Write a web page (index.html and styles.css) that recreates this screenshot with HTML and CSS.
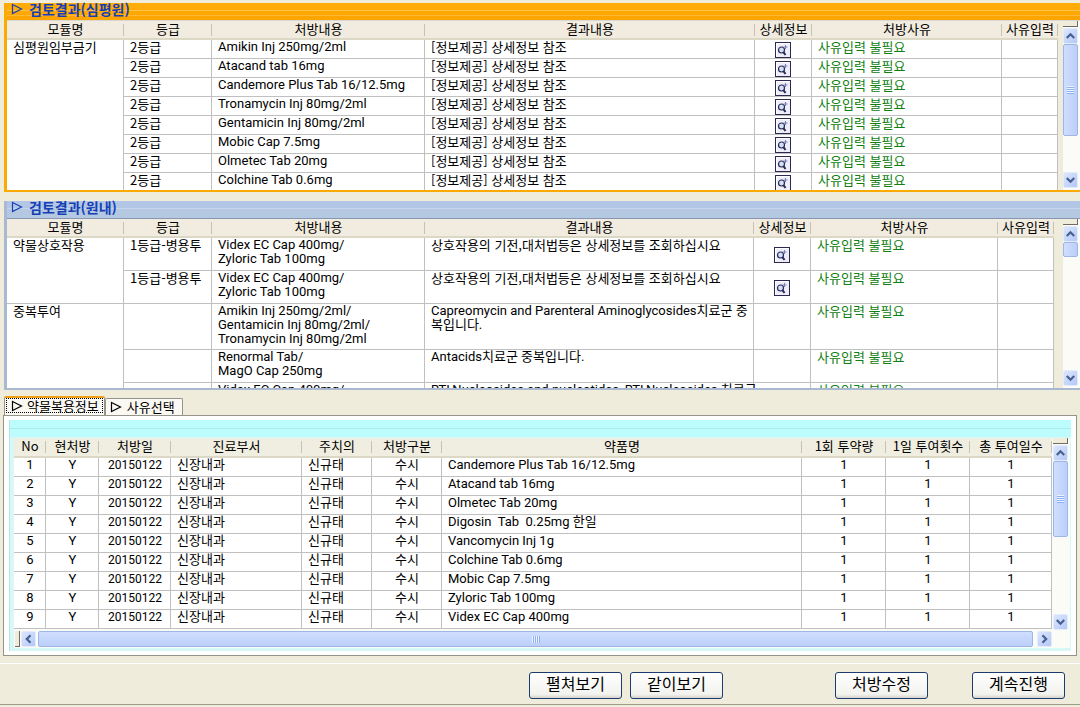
FILE: index.html
```html
<!DOCTYPE html>
<html lang="ko">
<head>
<meta charset="utf-8">
<title>처방 검토결과</title>
<link rel="stylesheet" href="styles.css">
</head>
<body>
<svg class="defs" aria-hidden="true">
  <symbol id="lens" viewBox="0 0 16 16">
    <rect x="0.5" y="0.5" width="15" height="15" fill="#eeeef8" stroke="#2c2850"/>
    <path d="M1.500 14.500V1.500H14.500" fill="none" stroke="#fff"/>
    <circle cx="6.500" cy="8" r="3" fill="#d4e0f4" stroke="#2a2a58" stroke-width="1.200"/>
    <path d="M8.500 10.200L10.500 13" stroke="#2a2a58" stroke-width="2"/>
    <path d="M10.500 3V7M8.500 5H12.500" stroke="#7a82b4"/>
  </symbol>
  <symbol id="play" viewBox="0 0 12 12"><path d="M1.500 1.500L10.500 6L1.500 10.500Z" fill="none" stroke="currentColor" stroke-width="1.200"/></symbol>
  <symbol id="up" viewBox="0 0 14 14"><path d="M3 9.200L7 5.200L11 9.200" fill="none" stroke="#46618f" stroke-width="2.400"/></symbol>
  <symbol id="down" viewBox="0 0 14 14"><path d="M3 4.800L7 8.800L11 4.800" fill="none" stroke="#46618f" stroke-width="2.400"/></symbol>
  <symbol id="left" viewBox="0 0 14 14"><path d="M9.200 3L5.200 7L9.200 11" fill="none" stroke="#46618f" stroke-width="2.400"/></symbol>
  <symbol id="right" viewBox="0 0 14 14"><path d="M4.800 3L8.800 7L4.800 11" fill="none" stroke="#46618f" stroke-width="2.400"/></symbol>
</svg>
<main class="app">
  <section class="panel panel-hira">
    <h2 class="panel-title"><svg class="play"><use href="#play"/></svg>검토결과(심평원)</h2>
    <div class="panel-body">
      <div class="grid-clip">
        <table class="grid">
          <colgroup><col class="w-module"><col class="w-grade"><col class="w-drug"><col><col class="w-detail"><col class="w-reason"><col class="w-input"></colgroup>
          <thead><tr><th>모듈명</th><th>등급</th><th>처방내용</th><th>결과내용</th><th>상세정보</th><th>처방사유</th><th>사유입력</th></tr></thead>
          <tbody>
            <tr><td rowspan="8">심평원임부금기</td><td>2등급</td><td class="latin">Amikin Inj 250mg/2ml</td><td>[정보제공] 상세정보 참조</td><td class="icon-cell"><button class="lens" aria-label="상세정보"><svg><use href="#lens"/></svg></button></td><td class="ok">사유입력 불필요</td><td></td></tr>
            <tr><td>2등급</td><td class="latin">Atacand tab 16mg</td><td>[정보제공] 상세정보 참조</td><td class="icon-cell"><button class="lens" aria-label="상세정보"><svg><use href="#lens"/></svg></button></td><td class="ok">사유입력 불필요</td><td></td></tr>
            <tr><td>2등급</td><td class="latin">Candemore Plus Tab 16/12.5mg</td><td>[정보제공] 상세정보 참조</td><td class="icon-cell"><button class="lens" aria-label="상세정보"><svg><use href="#lens"/></svg></button></td><td class="ok">사유입력 불필요</td><td></td></tr>
            <tr><td>2등급</td><td class="latin">Tronamycin Inj 80mg/2ml</td><td>[정보제공] 상세정보 참조</td><td class="icon-cell"><button class="lens" aria-label="상세정보"><svg><use href="#lens"/></svg></button></td><td class="ok">사유입력 불필요</td><td></td></tr>
            <tr><td>2등급</td><td class="latin">Gentamicin Inj 80mg/2ml</td><td>[정보제공] 상세정보 참조</td><td class="icon-cell"><button class="lens" aria-label="상세정보"><svg><use href="#lens"/></svg></button></td><td class="ok">사유입력 불필요</td><td></td></tr>
            <tr><td>2등급</td><td class="latin">Mobic Cap 7.5mg</td><td>[정보제공] 상세정보 참조</td><td class="icon-cell"><button class="lens" aria-label="상세정보"><svg><use href="#lens"/></svg></button></td><td class="ok">사유입력 불필요</td><td></td></tr>
            <tr><td>2등급</td><td class="latin">Olmetec Tab 20mg</td><td>[정보제공] 상세정보 참조</td><td class="icon-cell"><button class="lens" aria-label="상세정보"><svg><use href="#lens"/></svg></button></td><td class="ok">사유입력 불필요</td><td></td></tr>
            <tr><td>2등급</td><td class="latin">Colchine Tab 0.6mg</td><td>[정보제공] 상세정보 참조</td><td class="icon-cell"><button class="lens" aria-label="상세정보"><svg><use href="#lens"/></svg></button></td><td class="ok">사유입력 불필요</td><td></td></tr>
          </tbody>
        </table>
      </div>
      <div class="vbar">
        <span class="split"></span>
        <button class="arrow" aria-label="위로"><svg><use href="#up"/></svg></button>
        <div class="track"><div class="thumb thumb-hira"><span class="grip"></span></div></div>
        <button class="arrow" aria-label="아래로"><svg><use href="#down"/></svg></button>
      </div>
    </div>
  </section>

  <section class="panel panel-house">
    <h2 class="panel-title"><svg class="play"><use href="#play"/></svg>검토결과(원내)</h2>
    <div class="panel-body">
      <div class="grid-clip">
        <table class="grid grid-tall">
          <colgroup><col class="w-module"><col class="w-grade"><col class="w-drug"><col><col class="w-detail"><col class="w-reason"><col class="w-input"></colgroup>
          <thead><tr><th>모듈명</th><th>등급</th><th>처방내용</th><th>결과내용</th><th>상세정보</th><th>처방사유</th><th>사유입력</th></tr></thead>
          <tbody>
            <tr><td rowspan="2">약물상호작용</td><td>1등급-병용투</td><td class="latin">Videx EC Cap 400mg/<br>Zyloric Tab 100mg</td><td>상호작용의 기전,대처법등은 상세정보를 조회하십시요</td><td class="icon-cell"><button class="lens" aria-label="상세정보"><svg><use href="#lens"/></svg></button></td><td class="ok">사유입력 불필요</td><td></td></tr>
            <tr><td>1등급-병용투</td><td class="latin">Videx EC Cap 400mg/<br>Zyloric Tab 100mg</td><td>상호작용의 기전,대처법등은 상세정보를 조회하십시요</td><td class="icon-cell"><button class="lens" aria-label="상세정보"><svg><use href="#lens"/></svg></button></td><td class="ok">사유입력 불필요</td><td></td></tr>
            <tr><td rowspan="3">중복투여</td><td></td><td class="latin">Amikin Inj 250mg/2ml/<br>Gentamicin Inj 80mg/2ml/<br>Tronamycin Inj 80mg/2ml</td><td class="latin">Capreomycin and Parenteral Aminoglycosides치료군 중<br>복입니다.</td><td></td><td class="ok">사유입력 불필요</td><td></td></tr>
            <tr><td></td><td class="latin">Renormal Tab/<br>MagO Cap 250mg</td><td class="latin">Antacids치료군 중복입니다.</td><td></td><td class="ok">사유입력 불필요</td><td></td></tr>
            <tr><td></td><td class="latin">Videx EC Cap 400mg/</td><td class="latin">RTI,Nucleosides and nucleotides, RTI,Nucleosides 치료군</td><td></td><td class="ok">사유입력 불필요</td><td></td></tr>
          </tbody>
        </table>
      </div>
      <div class="vbar">
        <span class="split"></span>
        <button class="arrow" aria-label="위로"><svg><use href="#up"/></svg></button>
        <div class="track"><div class="thumb thumb-house"></div></div>
        <button class="arrow" aria-label="아래로"><svg><use href="#down"/></svg></button>
      </div>
    </div>
  </section>

  <section class="tabs">
    <div class="tab-list" role="tablist">
      <button class="tab tab-active" role="tab" aria-selected="true"><svg class="play"><use href="#play"/></svg>약물복용정보</button>
      <button class="tab" role="tab" aria-selected="false"><svg class="play"><use href="#play"/></svg>사유선택</button>
    </div>
    <div class="tab-pane" role="tabpanel">
      <div class="meds">
        <div class="meds-main">
          <table class="grid grid-meds">
            <colgroup><col class="w-no"><col class="w-current"><col class="w-date"><col class="w-dept"><col class="w-doctor"><col class="w-kind"><col><col class="w-dose"><col class="w-dose"><col class="w-days"></colgroup>
            <thead><tr><th>No</th><th>현처방</th><th>처방일</th><th>진료부서</th><th>주치의</th><th>처방구분</th><th>약품명</th><th>1회 투약량</th><th>1일 투여횟수</th><th>총 투여일수</th></tr></thead>
            <tbody>
              <tr><td>1</td><td>Y</td><td>20150122</td><td>신장내과</td><td>신규태</td><td>수시</td><td>Candemore Plus Tab 16/12.5mg</td><td>1</td><td>1</td><td>1</td></tr>
              <tr><td>2</td><td>Y</td><td>20150122</td><td>신장내과</td><td>신규태</td><td>수시</td><td>Atacand tab 16mg</td><td>1</td><td>1</td><td>1</td></tr>
              <tr><td>3</td><td>Y</td><td>20150122</td><td>신장내과</td><td>신규태</td><td>수시</td><td>Olmetec Tab 20mg</td><td>1</td><td>1</td><td>1</td></tr>
              <tr><td>4</td><td>Y</td><td>20150122</td><td>신장내과</td><td>신규태</td><td>수시</td><td>Digosin&nbsp; Tab&nbsp; 0.25mg 한일</td><td>1</td><td>1</td><td>1</td></tr>
              <tr><td>5</td><td>Y</td><td>20150122</td><td>신장내과</td><td>신규태</td><td>수시</td><td>Vancomycin Inj 1g</td><td>1</td><td>1</td><td>1</td></tr>
              <tr><td>6</td><td>Y</td><td>20150122</td><td>신장내과</td><td>신규태</td><td>수시</td><td>Colchine Tab 0.6mg</td><td>1</td><td>1</td><td>1</td></tr>
              <tr><td>7</td><td>Y</td><td>20150122</td><td>신장내과</td><td>신규태</td><td>수시</td><td>Mobic Cap 7.5mg</td><td>1</td><td>1</td><td>1</td></tr>
              <tr><td>8</td><td>Y</td><td>20150122</td><td>신장내과</td><td>신규태</td><td>수시</td><td>Zyloric Tab 100mg</td><td>1</td><td>1</td><td>1</td></tr>
              <tr><td>9</td><td>Y</td><td>20150122</td><td>신장내과</td><td>신규태</td><td>수시</td><td>Videx EC Cap 400mg</td><td>1</td><td>1</td><td>1</td></tr>
            </tbody>
          </table>
          <div class="hbar">
            <span class="hsplit"></span>
            <button class="arrow" aria-label="왼쪽으로"><svg><use href="#left"/></svg></button>
            <div class="hthumb"><span class="hgrip"></span></div>
            <button class="arrow" aria-label="오른쪽으로"><svg><use href="#right"/></svg></button>
          </div>
        </div>
        <div class="vbar vbar-meds">
          <span class="split"></span>
          <button class="arrow" aria-label="위로"><svg><use href="#up"/></svg></button>
          <div class="track"><div class="thumb thumb-meds"><span class="grip"></span></div></div>
          <button class="arrow" aria-label="아래로"><svg><use href="#down"/></svg></button>
        </div>
      </div>
    </div>
  </section>

  <footer class="actions">
    <button class="btn">펼쳐보기</button>
    <button class="btn">같이보기</button>
    <button class="btn btn-edit">처방수정</button>
    <button class="btn btn-go">계속진행</button>
  </footer>
</main>
</body>
</html>
```
FILE: styles.css
```css
* { box-sizing: border-box; }
body {
  margin: 0;
  background: #f0ecdc;
  color: #000;
  font: 13px/14px "Noto Sans CJK KR", sans-serif;
}
button { margin: 0; padding: 0; font: inherit; color: inherit; }
svg { display: block; }
.defs { position: absolute; width: 0; height: 0; }
.app { padding-top: 3px; }
.play { width: 12px; height: 12px; flex: none; }

.panel { margin-left: 4px; border-left: 3px solid; border-bottom: 2px solid; }
.panel-hira { border-color: #fbaa04; }
.panel-house { margin-top: 9px; border-color: #a9b9d2; }
.panel-title {
  display: flex;
  align-items: center;
  gap: 6px;
  height: 17px;
  margin: 0;
  padding: 0 4px 6px;
  color: #1440b4;
  font-size: 14px;
  line-height: 12px;
  font-weight: 700;
}
.panel-hira .panel-title { background: linear-gradient(#ffab08 0 7px, #ffc04c 7px 8px, #ffa800 8px 12px, #ffb838 12px 13px, #fca400 13px); }
.panel-house .panel-title { background: linear-gradient(#b4c6e6 0 7px, #c6d4ec 7px 8px, #b4c8e2 8px); }
.panel-body { display: flex; height: 170px; background: #fff; }
.panel-hira .panel-body { border-top: 1px solid #d8d8d0; }
.panel-house .panel-body { border-top: 1px solid #8898b0; }
.grid-clip { flex: 1; overflow: hidden; }

.grid { width: 100%; table-layout: fixed; border-collapse: separate; border-spacing: 0; background: #fff; }
.grid th {
  height: 19px;
  padding: 0 0 2px;
  font-weight: 400;
  text-align: center;
  white-space: nowrap;
  background: linear-gradient(#c6c3b4, #c6c3b4) right 3px / 1px 12px no-repeat, #f1ecdf;
  border-bottom: 2px solid #dcd8c6;
}
.grid td {
  height: 19px;
  padding: 0 5px 3px 6px;
  vertical-align: top;
  white-space: nowrap;
  border-right: 1px solid #c0c0c0;
  border-bottom: 1px solid #c0c0c0;
}
.grid-tall td { height: 33px; }
.grid .icon-cell { padding: 2px 0 0; vertical-align: middle; }
.grid .ok { color: #108010; }
.grid .latin { font-family: Roboto, "Noto Sans CJK KR", sans-serif; }
.lens { display: block; width: 16px; height: 16px; margin: 0 auto; border: 0; background: none; }
.lens svg { width: 16px; height: 16px; }
.w-module { width: 117px; }
.w-grade { width: 88px; }
.w-drug { width: 213px; }
.w-detail { width: 57px; }
.w-reason { width: 190px; }
.w-input { width: 56px; }
.panel-house .w-reason { width: 187px; }

.vbar { display: flex; flex-direction: column; flex: none; width: 22px; padding: 0 2px 2px 5px; background: linear-gradient(to right, #f0ecdc 0 5px, #fbfbf8 5px); }
.panel-house .vbar { width: 26px; padding-left: 9px; background: linear-gradient(to right, #f0ecdc 0 9px, #fbfbf8 9px); }
.split { height: 6px; margin-bottom: 1px; background: #f0ecdc; border-right: 1px solid #706c60; border-bottom: 1px solid #706c60; }
.arrow {
  flex: none;
  width: 15px;
  height: 16px;
  border: 1px solid #e4ecfc;
  border-radius: 2px;
  background: linear-gradient(135deg, #dce6ff, #b4c8f6);
}
.arrow svg { width: 13px; height: 14px; }
.track { flex: 1; }
.thumb {
  display: flex;
  align-items: center;
  justify-content: center;
  width: 15px;
  border: 1px solid #9cb6e6;
  border-radius: 2px;
  background: linear-gradient(to right, #d0defe, #bccffa);
}
.thumb-hira { height: 92px; }
.thumb-house { height: 15px; }
.thumb-meds { height: 76px; }
.grip { width: 7px; height: 8px; background: repeating-linear-gradient(#eef4fe 0 1px, #8cb0f8 1px 2px); }

.tabs { padding: 6px 3px 0; }
.tab-list { display: flex; align-items: flex-end; padding-left: 1px; }
.tab {
  display: flex;
  align-items: center;
  gap: 5px;
  height: 17px;
  padding: 0 7px 0 4px;
  border: 1px solid #96938a;
  border-bottom: 0;
  border-radius: 2px 2px 0 0;
  background: #faf9f4;
}
.tab-active { height: 19px; padding: 0 5px 2px 6px; gap: 4px; border-top: 2px solid #f0a018; outline: 1px dotted #000; outline-offset: -3px; }
.tab-pane { padding: 4px 5px; border: 1px solid #96938a; background: #fff; }
.meds {
  display: flex;
  padding: 18px 1px 3px 4px;
  border-left: 1px solid #b4e4e8;
  background: linear-gradient(#bcfcfc 0 8px, #a8ecf0 8px 9px, #bcfcfc 9px 17px, #d8f8f8 17px);
}
.meds-main { flex: 1; min-width: 0; background: #fff; }
.grid-meds th { height: 20px; background-color: #f0eee0; }
.grid-meds td { text-align: center; font-family: Roboto, "Noto Sans CJK KR", sans-serif; }
.grid-meds td:nth-child(3) { font-size: 12px; }
.grid-meds td:nth-child(4), .grid-meds td:nth-child(5), .grid-meds td:nth-child(7) { text-align: left; }
.w-no { width: 32px; }
.w-current { width: 53px; }
.w-date { width: 72px; }
.w-dept { width: 131px; }
.w-doctor { width: 70px; }
.w-kind { width: 70px; }
.w-dose { width: 84px; }
.w-days { width: 82px; }
.vbar-meds { width: 18px; padding: 0 2px 18px 1px; background: linear-gradient(#fbfbf8, #fbfbf8); }
.hbar { display: flex; height: 19px; padding: 2px 0 1px 1px; background: #fbfbf8; }
.hsplit { width: 5px; margin-right: 1px; border-right: 1px solid #706c60; border-bottom: 1px solid #706c60; background: #f0ecdc; }
.hthumb { display: flex; align-items: center; justify-content: center; flex: 1; margin: 0 4px 0 2px; border: 1px solid #9cb6e6; border-radius: 2px; background: linear-gradient(#d0defe, #bccffa); }
.hgrip { width: 8px; height: 7px; background: repeating-linear-gradient(to right, #eef4fe 0 1px, #8cb0f8 1px 2px); }

.actions { display: flex; gap: 8px; margin-top: 7px; padding: 8px 15px 5px; border-top: 1px solid #fff; border-bottom: 1px solid #a09c8c; justify-content: flex-end; }
.btn {
  width: 93px;
  height: 27px;
  padding-bottom: 5px;
  border: 1px solid #1c3c70;
  border-radius: 3px;
  background: linear-gradient(#fff, #f2f2ee 85%, #d8d4cc);
  font-size: 16px;
  line-height: 20px;
}
.btn-edit { margin-left: 104px; }
.btn-go { margin-left: 36px; }
```
